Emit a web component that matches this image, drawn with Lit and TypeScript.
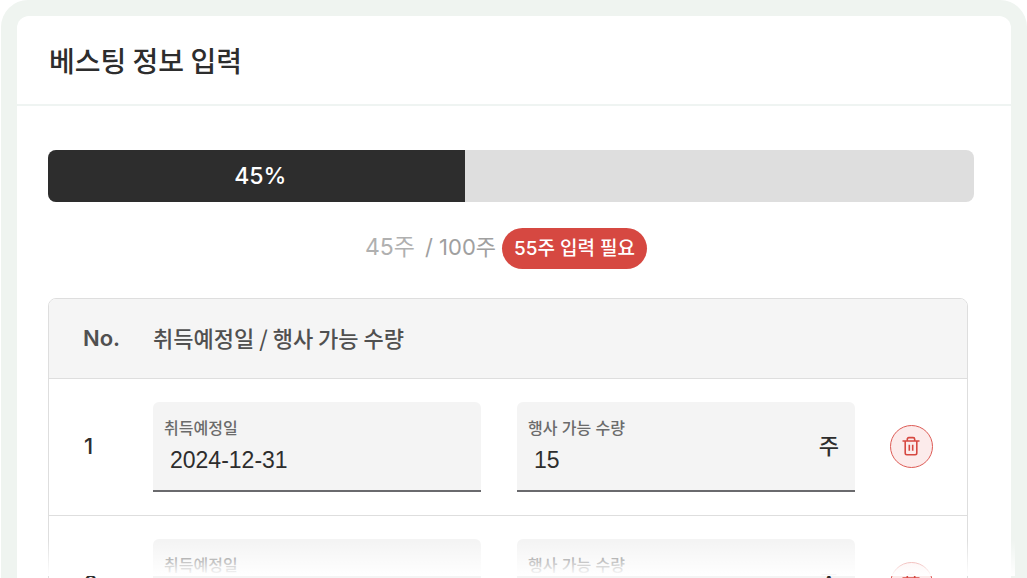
import { LitElement, html, css } from "lit";
import { customElement, property } from "lit/decorators.js";

interface Vesting {
  date: string;
  amount: number;
}

@customElement("vesting-row-field")
class VestingRowField extends LitElement {
  @property() label = "";
  @property() value = "";
  @property() unit = "";

  static styles = css`
    :host {
      display: block;
      min-width: 0;
    }
    .field {
      display: flex;
      align-items: center;
      box-sizing: border-box;
      height: 90px;
      padding: 0 16px 0 11px;
      background: #f4f4f4;
      border-bottom: 2px solid #6a6a6d;
      border-radius: 6px 6px 0 0;
    }
    .stack {
      display: flex;
      flex-direction: column;
      flex: 1;
      min-width: 0;
      padding-top: 4px;
    }
    .label {
      font-size: 16px;
      line-height: 24px;
      color: #6b6b6b;
    }
    .input {
      box-sizing: border-box;
      width: 100%;
      height: 40px;
      padding: 0 6px;
      border: 0;
      outline: 0;
      background: none;
      font: 23px "Liberation Sans", "Noto Sans CJK KR", sans-serif;
      color: #2d2d2d;
    }
    .unit {
      padding-bottom: 4px;
      font-size: 22px;
      font-weight: 500;
      color: #2d2d2d;
    }
  `;

  render() {
    return html`
      <div class="field">
        <div class="stack">
          <label class="label" for="value">${this.label}</label>
          <input class="input" id="value" type="text" .value=${this.value} />
        </div>
        ${this.unit ? html`<span class="unit">${this.unit}</span>` : ""}
      </div>
    `;
  }
}

@customElement("app-root")
class AppRoot extends LitElement {
  private total = 100;
  private entered = 45;
  private rows: Vesting[] = [
    { date: "2024-12-31", amount: 15 },
    { date: "2025-12-31", amount: 30 },
  ];

  static styles = css`
    :host {
      display: block;
      position: relative;
      height: 100vh;
      overflow: hidden;
      background: #fff;
      font-family: "Inter", "Noto Sans CJK KR", sans-serif;
      color: #2d2d2d;
    }
    .frame {
      margin-left: 1px;
      padding: 16px 16px 0;
      background: #eff4f0;
      border-radius: 27px 27px 0 0;
    }
    .card {
      background: #fff;
      border-radius: 12px 12px 0 0;
    }
    .head {
      box-sizing: border-box;
      display: flex;
      align-items: center;
      height: 90px;
      padding: 0 32px;
      border-bottom: 2px solid #eff4f2;
    }
    .title {
      margin: 0;
      font-family: "Noto Sans CJK KR", sans-serif;
      font-size: 28px;
      font-weight: 500;
      line-height: 40px;
    }
    .body {
      padding: 44px 37px 0 31px;
    }
    .bar {
      height: 52px;
      background: #dedede;
      border-radius: 8px;
      overflow: hidden;
    }
    .fill {
      box-sizing: border-box;
      display: flex;
      align-items: center;
      justify-content: center;
      height: 100%;
      padding-left: 8px;
      background: #2d2d2d;
      color: #fff;
      font-size: 23px;
      font-weight: 500;
    }
    .summary {
      display: flex;
      align-items: center;
      justify-content: center;
      height: 41px;
      margin: 26px 0 29px;
      padding-right: 10px;
      font-size: 22px;
      line-height: 32px;
      color: #a0a0a0;
    }
    .count {
      padding-bottom: 4px;
    }
    .current {
      margin-right: 10px;
      font-size: 23px;
      color: #b0b0b0;
    }
    .badge {
      margin-left: 6px;
      padding: 0 12px;
      border-radius: 21px;
      background: #d64841;
      color: #fff;
      font-size: 19px;
      font-weight: 500;
      line-height: 41px;
    }
    .wrap {
      margin-right: 6px;
      border: 1px solid #dedede;
      border-radius: 8px;
      overflow: hidden;
    }
    .table {
      width: 100%;
      border-collapse: separate;
      border-spacing: 0;
      table-layout: fixed;
    }
    .th {
      height: 79px;
      box-sizing: border-box;
      padding: 0 0 4px;
      background: #f5f5f5;
      border-bottom: 1px solid #dedede;
      text-align: left;
      font-family: "Noto Sans CJK KR", sans-serif;
      font-size: 22px;
      font-weight: 500;
      line-height: 32px;
      color: #505050;
    }
    .th,
    .td {
      height: 80px;
    }
    .no {
      width: 104px;
      padding-left: 34px;
      box-sizing: border-box;
    }
    .th.no {
      font-family: "Inter", sans-serif;
      font-weight: 600;
      padding-bottom: 2px;
    }
    .act {
      width: 112px;
    }
    .td {
      box-sizing: border-box;
      height: 137px;
      padding: 0;
      border-bottom: 1px solid #dedede;
      font-size: 22px;
      font-weight: 500;
    }
    .td.no {
      padding: 0 0 2px 35px;
    }
    .td.act {
      padding-bottom: 2px;
    }
    .fields {
      display: grid;
      grid-template-columns: 328fr 338fr;
      gap: 36px;
    }
    .remove {
      display: flex;
      align-items: center;
      justify-content: center;
      width: 43px;
      height: 43px;
      margin: 0 auto;
      padding: 0;
      border: 1px solid #dd5b55;
      border-radius: 50%;
      background: #fcebeb;
      color: #d64841;
    }
    .fade {
      position: absolute;
      left: 21px;
      right: 12px;
      bottom: 2px;
      height: 36px;
      background: linear-gradient(rgba(255, 255, 255, 0), #fff);
      pointer-events: none;
    }
  `;

  render() {
    const percent = Math.round((this.entered / this.total) * 100);
    return html`
      <main class="frame">
        <section class="card">
          <header class="head"><h1 class="title">베스팅 정보 입력</h1></header>
          <div class="body">
            <div class="bar">
              <div class="fill" style="width:${percent}%">${percent}%</div>
            </div>
            <div class="summary">
              <span class="count current">${this.entered}주</span>
              <span class="count">/ ${this.total}주</span>
              <span class="badge">${this.total - this.entered}주 입력 필요</span>
            </div>
            <div class="wrap">
              <table class="table">
                <thead>
                  <tr>
                    <th class="th no">No.</th>
                    <th class="th">취득예정일 / 행사 가능 수량</th>
                    <th class="th act"></th>
                  </tr>
                </thead>
                <tbody>
                  ${this.rows.map((row, i) => this.renderRow(row, i))}
                </tbody>
              </table>
            </div>
          </div>
        </section>
      </main>
      <div class="fade"></div>
    `;
  }

  private renderRow(row: Vesting, i: number) {
    return html`
      <tr>
        <td class="td no">${i + 1}</td>
        <td class="td">
          <div class="fields">
            <vesting-row-field label="취득예정일" .value=${row.date}></vesting-row-field>
            <vesting-row-field
              label="행사 가능 수량"
              .value=${String(row.amount)}
              unit="주"
            ></vesting-row-field>
          </div>
        </td>
        <td class="td act">
          <button class="remove" type="button" aria-label="삭제">
            <svg width="20" height="20" viewBox="0 0 20 20" fill="none" stroke="currentColor" stroke-width="1.6">
              <path d="M1.5 5h17M6.3 5V3.2Q6.3 1.6 7.9 1.6h4.2Q13.7 1.6 13.7 3.2V5M4.2 5v12q0 1.7 1.7 1.7h8.2q1.7 0 1.7-1.7V5M8.3 8.8v6M11.7 8.8v6" />
            </svg>
          </button>
        </td>
      </tr>
    `;
  }
}
